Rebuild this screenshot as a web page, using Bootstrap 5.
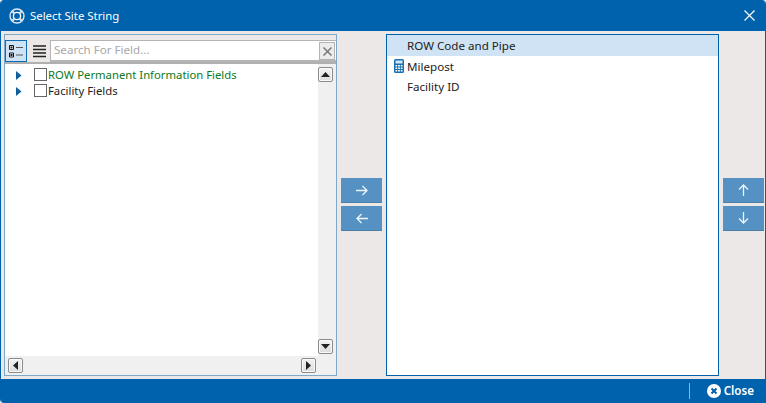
<!DOCTYPE html>
<html lang="en">
<head>
<meta charset="utf-8">
<title>Select Site String</title>
<link rel="stylesheet" href="https://cdn.jsdelivr.net/npm/bootstrap@5.3.0/dist/css/bootstrap.min.css">
<style>
html,body{height:403px;overflow:hidden;background:#fff}
body{font-family:"Noto Sans","Open Sans",sans-serif;font-size:11.3px;color:#222}
.win{width:766px;height:403px;background:#ece8e7;border-left:1px solid #0061ac;border-right:1px solid #0061ac;border-radius:4px 4px 0 4px;overflow:hidden}
.tbar{height:31px;background:#0061ac;color:#fff;margin:0 -1px;padding:0 11px 0 9px;flex:none}
.tbar-t{margin-left:5px;font-size:11.4px}
.mid{height:348px;padding:3px 0 3px 3px}
.lpanel{width:333px;flex:none;border:1px solid #7ea9cb;background:#fff}
.rpanel{width:333px;flex:none;border:1px solid #0061ac;background:#fff;font-size:11.6px}
.tools{height:29px;background:#ece8e7;padding:5px 0 0 0;border-bottom:2px solid #b0b0b0;flex:none}
.tgl{width:22px;height:22px;border:1px solid #0f6cb4;background:#cfe3f6}
.tgl2{width:22px;height:22px;margin-left:1px}
.srch{flex:1;height:22px;border:1px solid #b4b4b4;border-bottom-width:2px;border-right:0;background:#fff;color:#a8a8a8;padding-left:3px;line-height:18px;font-size:11.6px}
.clr{width:16px;height:18px;border:1px solid #b4b4b4;margin:1px 1px 0 0;background:#ececec}
.vbar{width:18px;background:#f0f0f0;padding:3px 0 2px 0;flex:none}
.hbar{height:19px;background:#f0f0f0;flex:none;padding:2px 20px 0 3px}
.sbtn{width:15px;height:15px;border:1px solid #8a8a8a;border-radius:2px;background:linear-gradient(#f2f2f2,#dcdcdc);box-shadow:inset 0 0 0 1px #fafafa}
.trow{height:16px;padding-left:11px}
.tchk{width:13px;height:13px;border:1px solid #666;margin:-1px 1px 0 12px;background:#fff;flex:none}
.tree{padding-top:3px}
.green{color:#0d7a1d}
.rrow{height:20px;padding:1px 0 0 20px;line-height:20px}
.rsel{height:21px;padding-top:1px;background:#cfe3f4}
.calc{margin:-1px 3px 0 -13px;flex:none}
.gut{width:49px;flex:none;padding:0 0 1px 4px;gap:3px}
.gut2{width:45px;flex:none;padding:0 0 1px 4px;gap:3px}
.mv{width:41px;height:25px;background:#5592c3;border-bottom:1px solid #4a7fa8;color:#fff}
.foot{height:24px;background:#0061ac;color:#fff;margin:0 -1px;padding-right:12px;flex:none}
.fsep{width:1px;height:16px;background:#8fb8d8;margin-right:17px}
.fclose{margin-left:3px;font-weight:600;font-size:11.6px}
</style>
</head>
<body>
<div class="win d-flex flex-column">
  <div class="tbar d-flex align-items-center">
    <svg width="16" height="16" viewBox="0 0 16 16"><circle cx="8" cy="8" r="7" fill="none" stroke="#dfeaf4" stroke-width="1.4"/><circle cx="8" cy="8" r="3.6" fill="none" stroke="#fff" stroke-width="1.4"/><path d="M3.4 3.4L5.6 5.6M12.6 3.4L10.4 5.6M3.4 12.6L5.6 10.4M12.6 12.6L10.4 10.4" stroke="#cfe0ee" stroke-width="2.2"/></svg>
    <span class="tbar-t">Select Site String</span>
    <svg class="ms-auto" width="11" height="11" viewBox="0 0 11 11"><path d="M.5.5L10.5 10.5M10.5.5L.5 10.5" stroke="#fff" stroke-width="1.2"/></svg>
  </div>
  <div class="mid d-flex flex-grow-1">
    <div class="lpanel d-flex flex-column">
      <div class="tools d-flex">
        <div class="tgl d-flex align-items-center justify-content-center">
          <svg width="14" height="13" viewBox="0 0 14 13"><path d="M.5.5h4v4h-4zM.5 8h4v4h-4z" fill="#fff" stroke="#111"/><path d="M1.5 1.5h2v2h-2zM1.5 9h2v2h-2z" fill="#111"/><path d="M7 2.5h7M7 10h7" stroke="#555" stroke-width="1.2"/></svg>
        </div>
        <div class="tgl2 d-flex align-items-center justify-content-center">
          <svg width="13" height="13" viewBox="0 0 13 13"><path d="M0 1h13M0 4.5h13M0 8h13M0 11.5h13" stroke="#222" stroke-width="1.3"/></svg>
        </div>
        <div class="srch d-flex">
          <span class="flex-grow-1">Search For Field...</span>
          <div class="clr d-flex align-items-center justify-content-center">
            <svg width="9" height="9" viewBox="0 0 9 9"><path d="M.5.5L8.5 8.5M8.5.5L.5 8.5" stroke="#777" stroke-width="1.5"/></svg>
          </div>
        </div>
      </div>
      <div class="d-flex flex-grow-1">
        <div class="tree flex-grow-1">
          <div class="trow d-flex align-items-center">
            <svg width="6" height="9" viewBox="0 0 6 9"><path d="M0 0L5.5 4.5L0 9z" fill="#0f5f9c"/></svg>
            <span class="tchk"></span><span class="green">ROW Permanent Information Fields</span>
          </div>
          <div class="trow d-flex align-items-center">
            <svg width="6" height="9" viewBox="0 0 6 9"><path d="M0 0L5.5 4.5L0 9z" fill="#0f5f9c"/></svg>
            <span class="tchk"></span><span>Facility Fields</span>
          </div>
        </div>
        <div class="vbar d-flex flex-column justify-content-between">
          <div class="sbtn d-flex align-items-center justify-content-center"><svg width="9" height="5" viewBox="0 0 9 5"><path d="M0 5L4.5 0L9 5z" fill="#222"/></svg></div>
          <div class="sbtn d-flex align-items-center justify-content-center"><svg width="9" height="5" viewBox="0 0 9 5"><path d="M0 0L4.5 5L9 0z" fill="#222"/></svg></div>
        </div>
      </div>
      <div class="hbar d-flex justify-content-between">
        <div class="sbtn d-flex align-items-center justify-content-center"><svg width="5" height="9" viewBox="0 0 5 9"><path d="M5 0L0 4.5L5 9z" fill="#222"/></svg></div>
        <div class="sbtn d-flex align-items-center justify-content-center"><svg width="5" height="9" viewBox="0 0 5 9"><path d="M0 0L5 4.5L0 9z" fill="#222"/></svg></div>
      </div>
    </div>
    <div class="gut d-flex flex-column justify-content-center">
      <div class="mv d-flex align-items-center justify-content-center"><svg width="12" height="11" viewBox="0 0 12 11"><path d="M0 5.5H11M6.5 1L11 5.5L6.5 10" fill="none" stroke="#eef4f9" stroke-width="1.3"/></svg></div>
      <div class="mv d-flex align-items-center justify-content-center"><svg width="12" height="11" viewBox="0 0 12 11"><path d="M12 5.5H1M5.5 1L1 5.5L5.5 10" fill="none" stroke="#eef4f9" stroke-width="1.3"/></svg></div>
    </div>
    <div class="rpanel">
      <div class="rrow rsel">ROW Code and Pipe</div>
      <div class="rrow d-flex align-items-center">
        <svg class="calc" width="10" height="14" viewBox="0 0 10 14"><rect width="10" height="14" rx="1.5" fill="#1a6fb0"/><rect x="1.5" y="1.5" width="7" height="3" fill="#d7e7f3"/><path d="M1.5 6h1.7v1.5H1.5zM4.1 6h1.8v1.5H4.1zM6.8 6h1.7v1.5H6.8zM1.5 8.5h1.7V10H1.5zM4.1 8.5h1.8V10H4.1zM6.8 8.5h1.7V10H6.8zM1.5 11h1.7v1.5H1.5zM4.1 11h1.8v1.5H4.1zM6.8 11h1.7v1.5H6.8z" fill="#fff"/></svg>
        <span>Milepost</span>
      </div>
      <div class="rrow">Facility ID</div>
    </div>
    <div class="gut2 d-flex flex-column justify-content-center">
      <div class="mv d-flex align-items-center justify-content-center"><svg width="11" height="12" viewBox="0 0 11 12"><path d="M5.5 12V1M1 5.5L5.5 1L10 5.5" fill="none" stroke="#eef4f9" stroke-width="1.3"/></svg></div>
      <div class="mv d-flex align-items-center justify-content-center"><svg width="11" height="12" viewBox="0 0 11 12"><path d="M5.5 0V11M1 6.5L5.5 11L10 6.5" fill="none" stroke="#eef4f9" stroke-width="1.3"/></svg></div>
    </div>
  </div>
  <div class="foot d-flex align-items-center justify-content-end">
    <div class="fsep"></div>
    <svg width="14" height="14" viewBox="0 0 14 14"><circle cx="7" cy="7" r="7" fill="#fff"/><path d="M4.5 4.5L9.5 9.5M9.5 4.5L4.5 9.5" stroke="#0061ac" stroke-width="2"/></svg>
    <span class="fclose">Close</span>
  </div>
</div>
<script src="https://cdn.jsdelivr.net/npm/bootstrap@5.3.0/dist/js/bootstrap.bundle.min.js"></script>
</body>
</html>
